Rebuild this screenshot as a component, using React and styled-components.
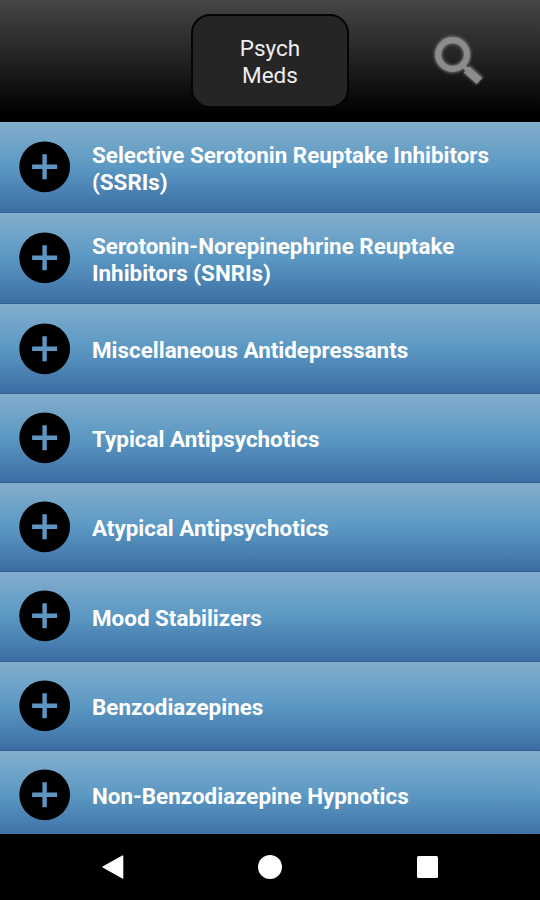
import React from 'react'
import styled, { createGlobalStyle } from 'styled-components';

const categories = [
    { name: 'Selective Serotonin Reuptake Inhibitors (SSRIs)', height: 91 },
    { name: 'Serotonin-Norepinephrine Reuptake Inhibitors (SNRIs)', height: 91.4 },
    { name: 'Miscellaneous Antidepressants' },
    { name: 'Typical Antipsychotics' },
    { name: 'Atypical Antipsychotics' },
    { name: 'Mood Stabilizers' },
    { name: 'Benzodiazepines' },
    { name: 'Non-Benzodiazepine Hypnotics' },
];

function PlusIcon() {
    return (
        <svg width="52" height="52" viewBox="0 0 52 52" aria-hidden="true">
            <circle cx="25.7" cy="25.8" r="25.4" fill="#000" />
            <path d="M25.6 13.3V38.3M13.1 25.8H38.1" stroke="#5d96c3" strokeWidth="4.4" />
        </svg>
    )
}

function SearchIcon() {
    return (
        <svg width="60" height="60" viewBox="0 0 60 60" aria-hidden="true">
            <defs>
                <filter id="glow" x="-20%" y="-20%" width="140%" height="140%">
                    <feGaussianBlur stdDeviation="1" />
                </filter>
            </defs>
            <g fill="none" stroke="#777" strokeOpacity="0.7" filter="url(#glow)">
                <circle cx="22.6" cy="23.5" r="14.4" strokeWidth="9" />
                <path d="M36.5 38L50 50" strokeWidth="11" />
            </g>
            <g fill="none" stroke="#8c8c8c">
                <circle cx="22.6" cy="23.5" r="14.4" strokeWidth="6.2" />
                <path d="M32 33.5L38 39.5" strokeWidth="4.5" />
                <path d="M36.5 38.5L49.5 50" strokeWidth="8" />
            </g>
        </svg>
    )
}

function App() {
    return (
        <>
            <GlobalStyle />
            <Screen>
                <Header>
                    <TitleButton>Psych<br />Meds</TitleButton>
                    <SearchButton aria-label="Search">
                        <SearchIcon />
                    </SearchButton>
                </Header>
                <List>
                    {categories.map((item) => (
                        <Row key={item.name} $height={item.height}>
                            <PlusIcon />
                            <RowLabel>{item.name}</RowLabel>
                        </Row>
                    ))}
                </List>
                <NavBar>
                    <svg width="24" height="26" viewBox="0 0 24 26">
                        <path d="M2 13L21.6 2V24Z" fill="#fff" stroke="#fff" strokeWidth="1.4" strokeLinejoin="round" />
                    </svg>
                    <HomeDot />
                    <RecentSquare />
                </NavBar>
            </Screen>
        </>
    )
}

const GlobalStyle = createGlobalStyle`
  * {
    box-sizing: border-box;
  }
  body {
    margin: 0;
    background: #000;
    font-family: Roboto, "Liberation Sans", sans-serif;
  }
`;

const Screen = styled.div`
  display: flex;
  flex-direction: column;
  width: 540px;
  height: 900px;
  overflow: hidden;
`;

const Header = styled.header`
  flex: none;
  display: grid;
  grid-template-columns: 191px 158px 1fr;
  height: 122px;
  padding-top: 14px;
  background: linear-gradient(#464646, #000 94%);
`;

const TitleButton = styled.button`
  height: 94px;
  padding: 2px 0 0;
  grid-column: 2;
  border: 2.5px solid #050505;
  border-radius: 19px;
  background: #252525;
  color: #eee;
  font-family: inherit;
  font-size: 22.5px;
  line-height: 27px;
`;

const SearchButton = styled.button`
  justify-self: start;
  width: 60px;
  height: 60px;
  margin: 17px 0 0 81px;
  padding: 0;
  border: none;
  background: none;
`;

const List = styled.ul`
  flex: none;
  height: 711.5px;
  margin: 0;
  padding: 0;
  overflow: hidden;
  list-style: none;
`;

const Row = styled.li`
  display: flex;
  align-items: center;
  gap: 21px;
  height: ${(props) => props.$height || 89.3}px;
  padding: 0 40px 0 19px;
  border-bottom: 1.5px solid #335e90;
  background: linear-gradient(#83aecd, #5b98c3 50%, #3c6da4);
  svg {
    flex: none;
  }
`;

const RowLabel = styled.span`
  padding-top: 3px;
  color: #fff;
  font-size: 22.4px;
  font-weight: 700;
  line-height: 26.5px;
`;

const NavBar = styled.nav`
  flex: 1;
  display: flex;
  align-items: center;
  justify-content: space-between;
  padding: 0 102px 0 101px;
  background: #000;
`;

const HomeDot = styled.span`
  width: 24px;
  height: 24px;
  margin-right: 1px;
  border-radius: 50%;
  background: #fff;
`;

const RecentSquare = styled.span`
  width: 21.5px;
  height: 22px;
  border-radius: 1.5px;
  background: #fff;
`;

export default App;
